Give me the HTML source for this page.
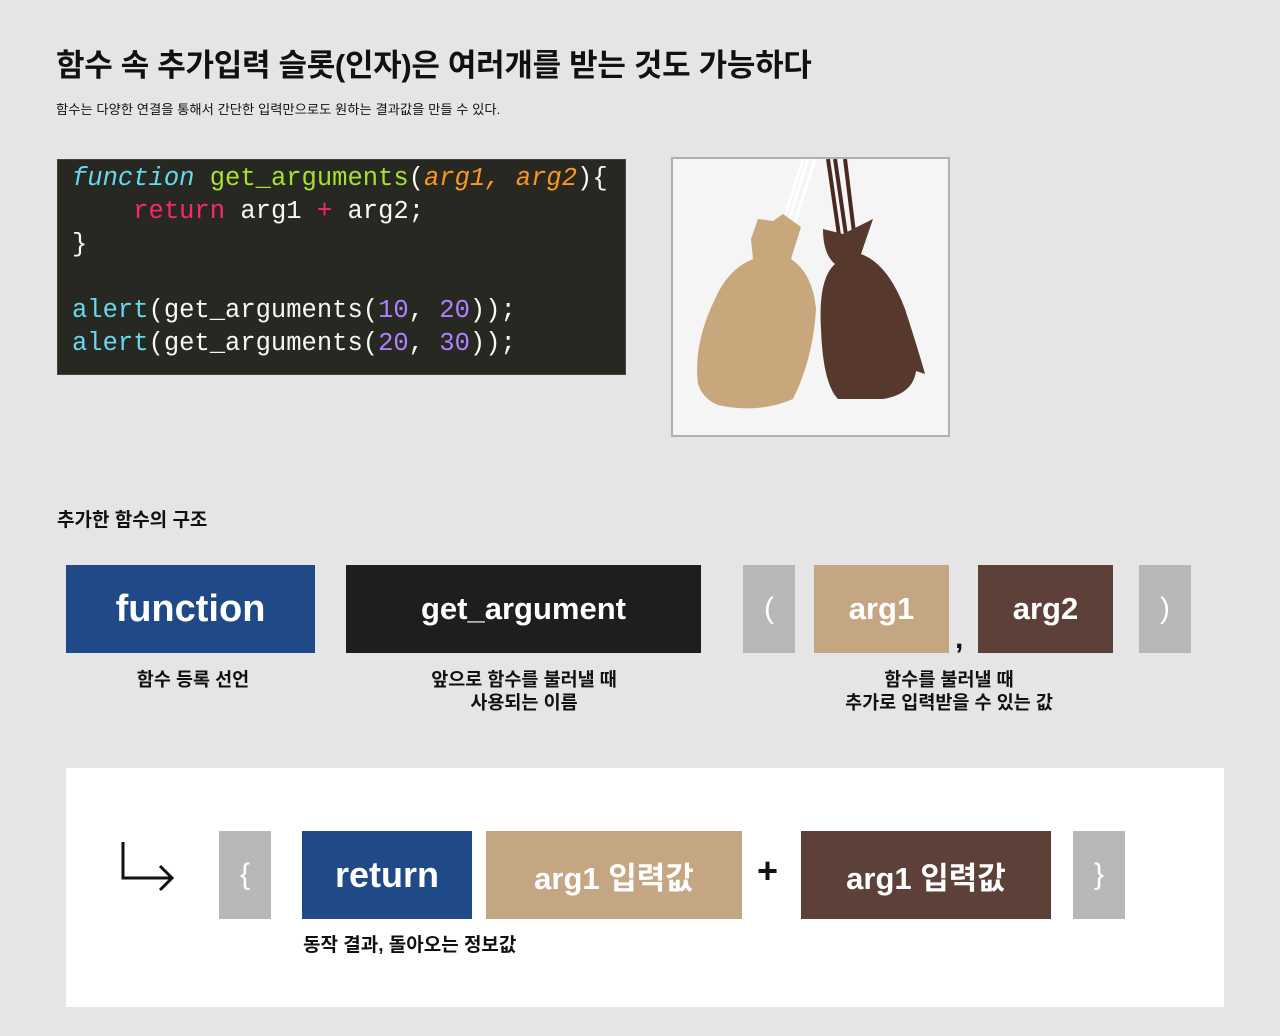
<!DOCTYPE html>
<html><head><meta charset="utf-8"><style>
body{margin:0;width:1280px;height:1036px;background:#e5e5e5;position:relative;overflow:hidden;font-family:"Liberation Sans","Noto Sans CJK KR",sans-serif;color:#111}
.a{position:absolute}
.box{position:absolute;display:flex;align-items:center;justify-content:center;color:#fff;font-weight:bold}
.lbl{position:absolute;text-align:center;font-weight:bold;font-size:18.5px;line-height:23px;color:#111}
.code{position:absolute;left:57px;top:159px;width:569px;height:216px;background:#272822;border:1px solid #444;box-sizing:border-box;font-family:"Liberation Mono","DejaVu Sans Mono",monospace;font-size:25.5px;line-height:33px;color:#f8f8f2;white-space:pre;padding:2px 0 0 14px}
.kw{color:#66d9ef;font-style:italic}.fn{color:#a6e22e}.ar{color:#fd971f;font-style:italic}.rt{color:#f92672}.cy{color:#66d9ef}.nm{color:#ae81ff}
</style></head><body>
<div class="a" style="left:56px;top:40px;font-size:31px;font-weight:bold;letter-spacing:-0.3px">함수 속 추가입력 슬롯(인자)은 여러개를 받는 것도 가능하다</div>
<div class="a" style="left:56px;top:99px;font-size:13.3px">함수는 다양한 연결을 통해서 간단한 입력만으로도 원하는 결과값을 만들 수 있다.</div>
<div class="code"><span class="kw">function</span> <span class="fn">get_arguments</span>(<span class="ar">arg1, arg2</span>){
    <span class="rt">return</span> arg1 <span class="rt">+</span> arg2;
}

<span class="cy">alert</span>(get_arguments(<span class="nm">10</span>, <span class="nm">20</span>));
<span class="cy">alert</span>(get_arguments(<span class="nm">20</span>, <span class="nm">30</span>));</div>
<div class="a" style="left:671px;top:157px;width:275px;height:276px;border:2px solid #b0b0b0;background:#f5f5f5;overflow:hidden">
<svg width="275" height="276" viewBox="0 0 275 276">
<path d="M135 0 L105 95 M142 0 L112 95 M130 0 L100 95" stroke="#fff" stroke-width="3"/>
<path d="M85 60 L100 62 L110 55 L128 68 L118 100 Q140 115 143 150 Q140 200 120 240 Q85 255 45 246 Q30 240 25 225 Q20 185 42 140 Q55 110 80 100 L78 80Z" fill="#c9a77c"/>
<path d="M155 0 L168 90 M162 0 L175 90 M172 0 L183 90" stroke="#4a2a20" stroke-width="4"/>
<path d="M150 70 L170 75 L200 60 L188 95 Q215 105 232 150 Q245 190 252 215 L243 212 Q240 235 210 240 L165 240 Q150 225 148 170 Q145 120 162 105 Q150 95 150 70Z" fill="#56382c"/>
</svg></div>
<div class="a" style="left:57px;top:505px;font-size:19px;font-weight:bold">추가한 함수의 구조</div>
<div class="box" style="left:66px;top:565px;width:249px;height:88px;background:#1f4a87;font-size:38px">function</div>
<div class="box" style="left:346px;top:565px;width:355px;height:88px;background:#1e1e1e;font-size:31px">get_argument</div>
<div class="box" style="left:743px;top:565px;width:52px;height:88px;background:#b8b8b8;font-size:30px;font-weight:normal">(</div>
<div class="box" style="left:814px;top:565px;width:135px;height:88px;background:#c4a683;font-size:31px">arg1</div>
<div class="a" style="left:955px;top:622px;font-size:30px;font-weight:bold">,</div>
<div class="box" style="left:978px;top:565px;width:135px;height:88px;background:#5d4037;font-size:31px">arg2</div>
<div class="box" style="left:1139px;top:565px;width:52px;height:88px;background:#b8b8b8;font-size:30px;font-weight:normal">)</div>
<div class="lbl" style="left:93px;width:200px;top:668px">함수 등록 선언</div>
<div class="lbl" style="left:374px;width:300px;top:668px">앞으로 함수를 불러낼 때<br>사용되는 이름</div>
<div class="lbl" style="left:799px;width:300px;top:668px">함수를 불러낼 때<br>추가로 입력받을 수 있는 값</div>
<div class="a" style="left:66px;top:768px;width:1158px;height:239px;background:#fff"></div>
<svg class="a" style="left:118px;top:840px" width="60" height="56"><path d="M5 2 V38 H54 M42 26 L54 38 L42 50" stroke="#111" stroke-width="3" fill="none"/></svg>
<div class="box" style="left:219px;top:831px;width:52px;height:88px;background:#b8b8b8;font-size:30px;font-weight:normal">{</div>
<div class="box" style="left:302px;top:831px;width:170px;height:88px;background:#1f4a87;font-size:36px">return</div>
<div class="box" style="left:486px;top:831px;width:256px;height:88px;background:#c4a683;font-size:31px">arg1 입력값</div>
<div class="a" style="left:757px;top:850px;font-size:36px;font-weight:bold">+</div>
<div class="box" style="left:801px;top:831px;width:250px;height:88px;background:#5d4037;font-size:31px">arg1 입력값</div>
<div class="box" style="left:1073px;top:831px;width:52px;height:88px;background:#b8b8b8;font-size:30px;font-weight:normal">}</div>
<div class="lbl" style="left:303px;top:934px;text-align:left;font-size:19px">동작 결과, 돌아오는 정보값</div>
</body></html>
